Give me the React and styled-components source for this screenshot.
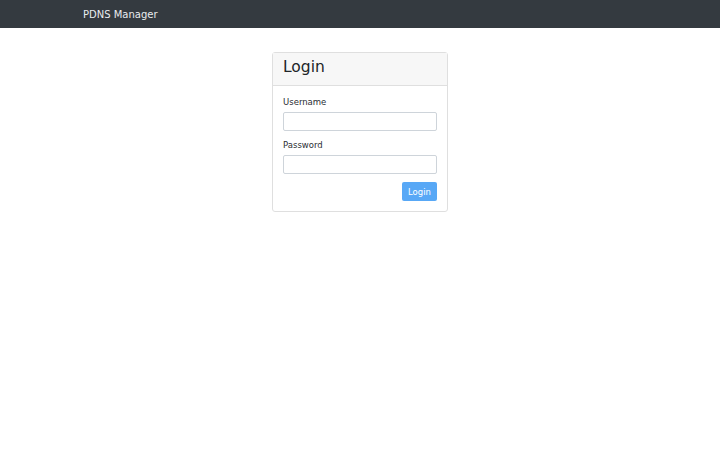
import React from 'react';
import styled, { createGlobalStyle } from 'styled-components';

const GlobalStyle = createGlobalStyle`
  body {
    margin: 0;
    background: #fff;
    font-family: "DejaVu Sans", "Noto Sans", sans-serif;
    color: #212529;
  }
`;

const Navbar = styled.nav`
  height: 28px;
  background: #343a40;
  display: flex;
  align-items: center;
  padding-left: 83px;
`;

const Brand = styled.span`
  color: #e9ecef;
  font-size: 10px;
`;

const Main = styled.main`
  display: flex;
  justify-content: center;
  padding-top: 24px;
`;

const Card = styled.div`
  box-sizing: border-box;
  width: 176px;
  border: 1px solid #dfdfdf;
  border-radius: 3px;
  background: #fff;
`;

const CardHeader = styled.div`
  box-sizing: border-box;
  height: 33px;
  background: #f7f7f7;
  border-bottom: 1px solid #dfdfdf;
  display: flex;
  align-items: center;
  padding: 0 10px 3px;
`;

const Title = styled.h1`
  margin: 0;
  font-size: 15.5px;
  font-weight: 400;
  line-height: 1;
`;

const CardBody = styled.form`
  padding: 10px 10px 10px;
  display: flex;
  flex-direction: column;
`;

const Label = styled.label`
  font-size: 8.5px;
  color: #2a2e33;
  margin-top: ${({ $first }) => ($first ? '1px' : '9px')};
  margin-bottom: 5px;
`;

const Input = styled.input`
  box-sizing: border-box;
  height: 19px;
  width: 100%;
  border: 1px solid #ced4da;
  border-radius: 2px;
  outline: none;
`;

const Actions = styled.div`
  display: flex;
  justify-content: flex-end;
  margin-top: 8px;
`;

const Button = styled.button`
  height: 19px;
  width: 35px;
  border: none;
  border-radius: 2px;
  background: #58a8f6;
  color: #fff;
  font-family: inherit;
  font-size: 8.5px;
  padding: 0;
`;

export default function App() {
  return (
    <>
      <GlobalStyle />
      <Navbar>
        <Brand>PDNS Manager</Brand>
      </Navbar>
      <Main>
        <Card>
          <CardHeader>
            <Title>Login</Title>
          </CardHeader>
          <CardBody onSubmit={(e) => e.preventDefault()}>
            <Label $first>Username</Label>
            <Input type="text" />
            <Label>Password</Label>
            <Input type="password" />
            <Actions>
              <Button type="submit">Login</Button>
            </Actions>
          </CardBody>
        </Card>
      </Main>
    </>
  );
}
